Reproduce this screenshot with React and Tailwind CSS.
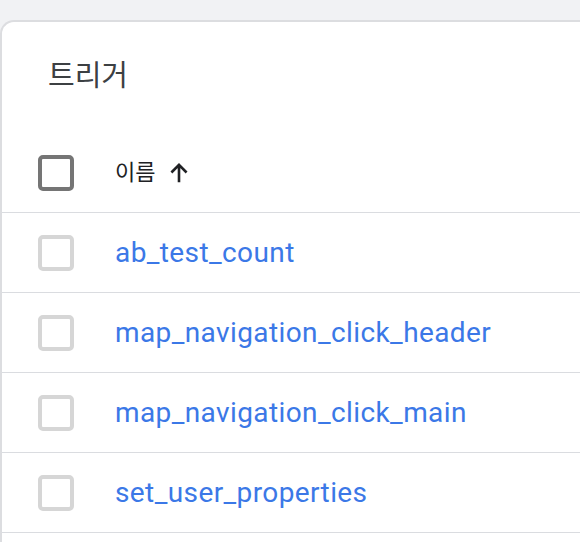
import React from "react";

const rows = [
  "ab_test_count",
  "map_navigation_click_header",
  "map_navigation_click_main",
  "set_user_properties",
];

export default function App() {
  return (
    <div
      className="w-[580px] h-[542px] overflow-hidden bg-[#f1f2f4] pt-[20px]"
      style={{ fontFamily: "Roboto, 'Noto Sans CJK KR', sans-serif" }}
    >
      <div className="bg-white border-t-2 border-l-2 border-[#dcdde0] rounded-tl-[14px] h-full">
        <div className="h-[111px] pl-[46px] pt-[34px]">
          <div className="text-[29px] leading-[40px] text-[#3c4043]">트리거</div>
        </div>
        <div className="h-[80px] flex items-center border-b border-[#dadce0]">
          <div className="ml-[36px] w-[36px] h-[36px] rounded-[5px] border-[4px] border-[#757575]" />
          <div className="ml-[41px] flex items-center text-[22px] text-[#202124]">
            <span>이름</span>
            <svg className="ml-[11px]" width="26" height="26" viewBox="0 0 24 24">
              <path d="M12 20.5V5M5 11.5L12 4.5L19 11.5" stroke="#202124" strokeWidth="2.4" fill="none" />
            </svg>
          </div>
        </div>
        {rows.map((r) => (
          <div key={r} className="h-[80px] flex items-center border-b border-[#dadce0]">
            <div className="ml-[36px] w-[36px] h-[36px] rounded-[5px] border-[4px] border-[#d6d6d6]" />
            <div className="ml-[41px] text-[28px] tracking-[0.4px] text-[#3b78e7]">{r}</div>
          </div>
        ))}
      </div>
    </div>
  );
}
